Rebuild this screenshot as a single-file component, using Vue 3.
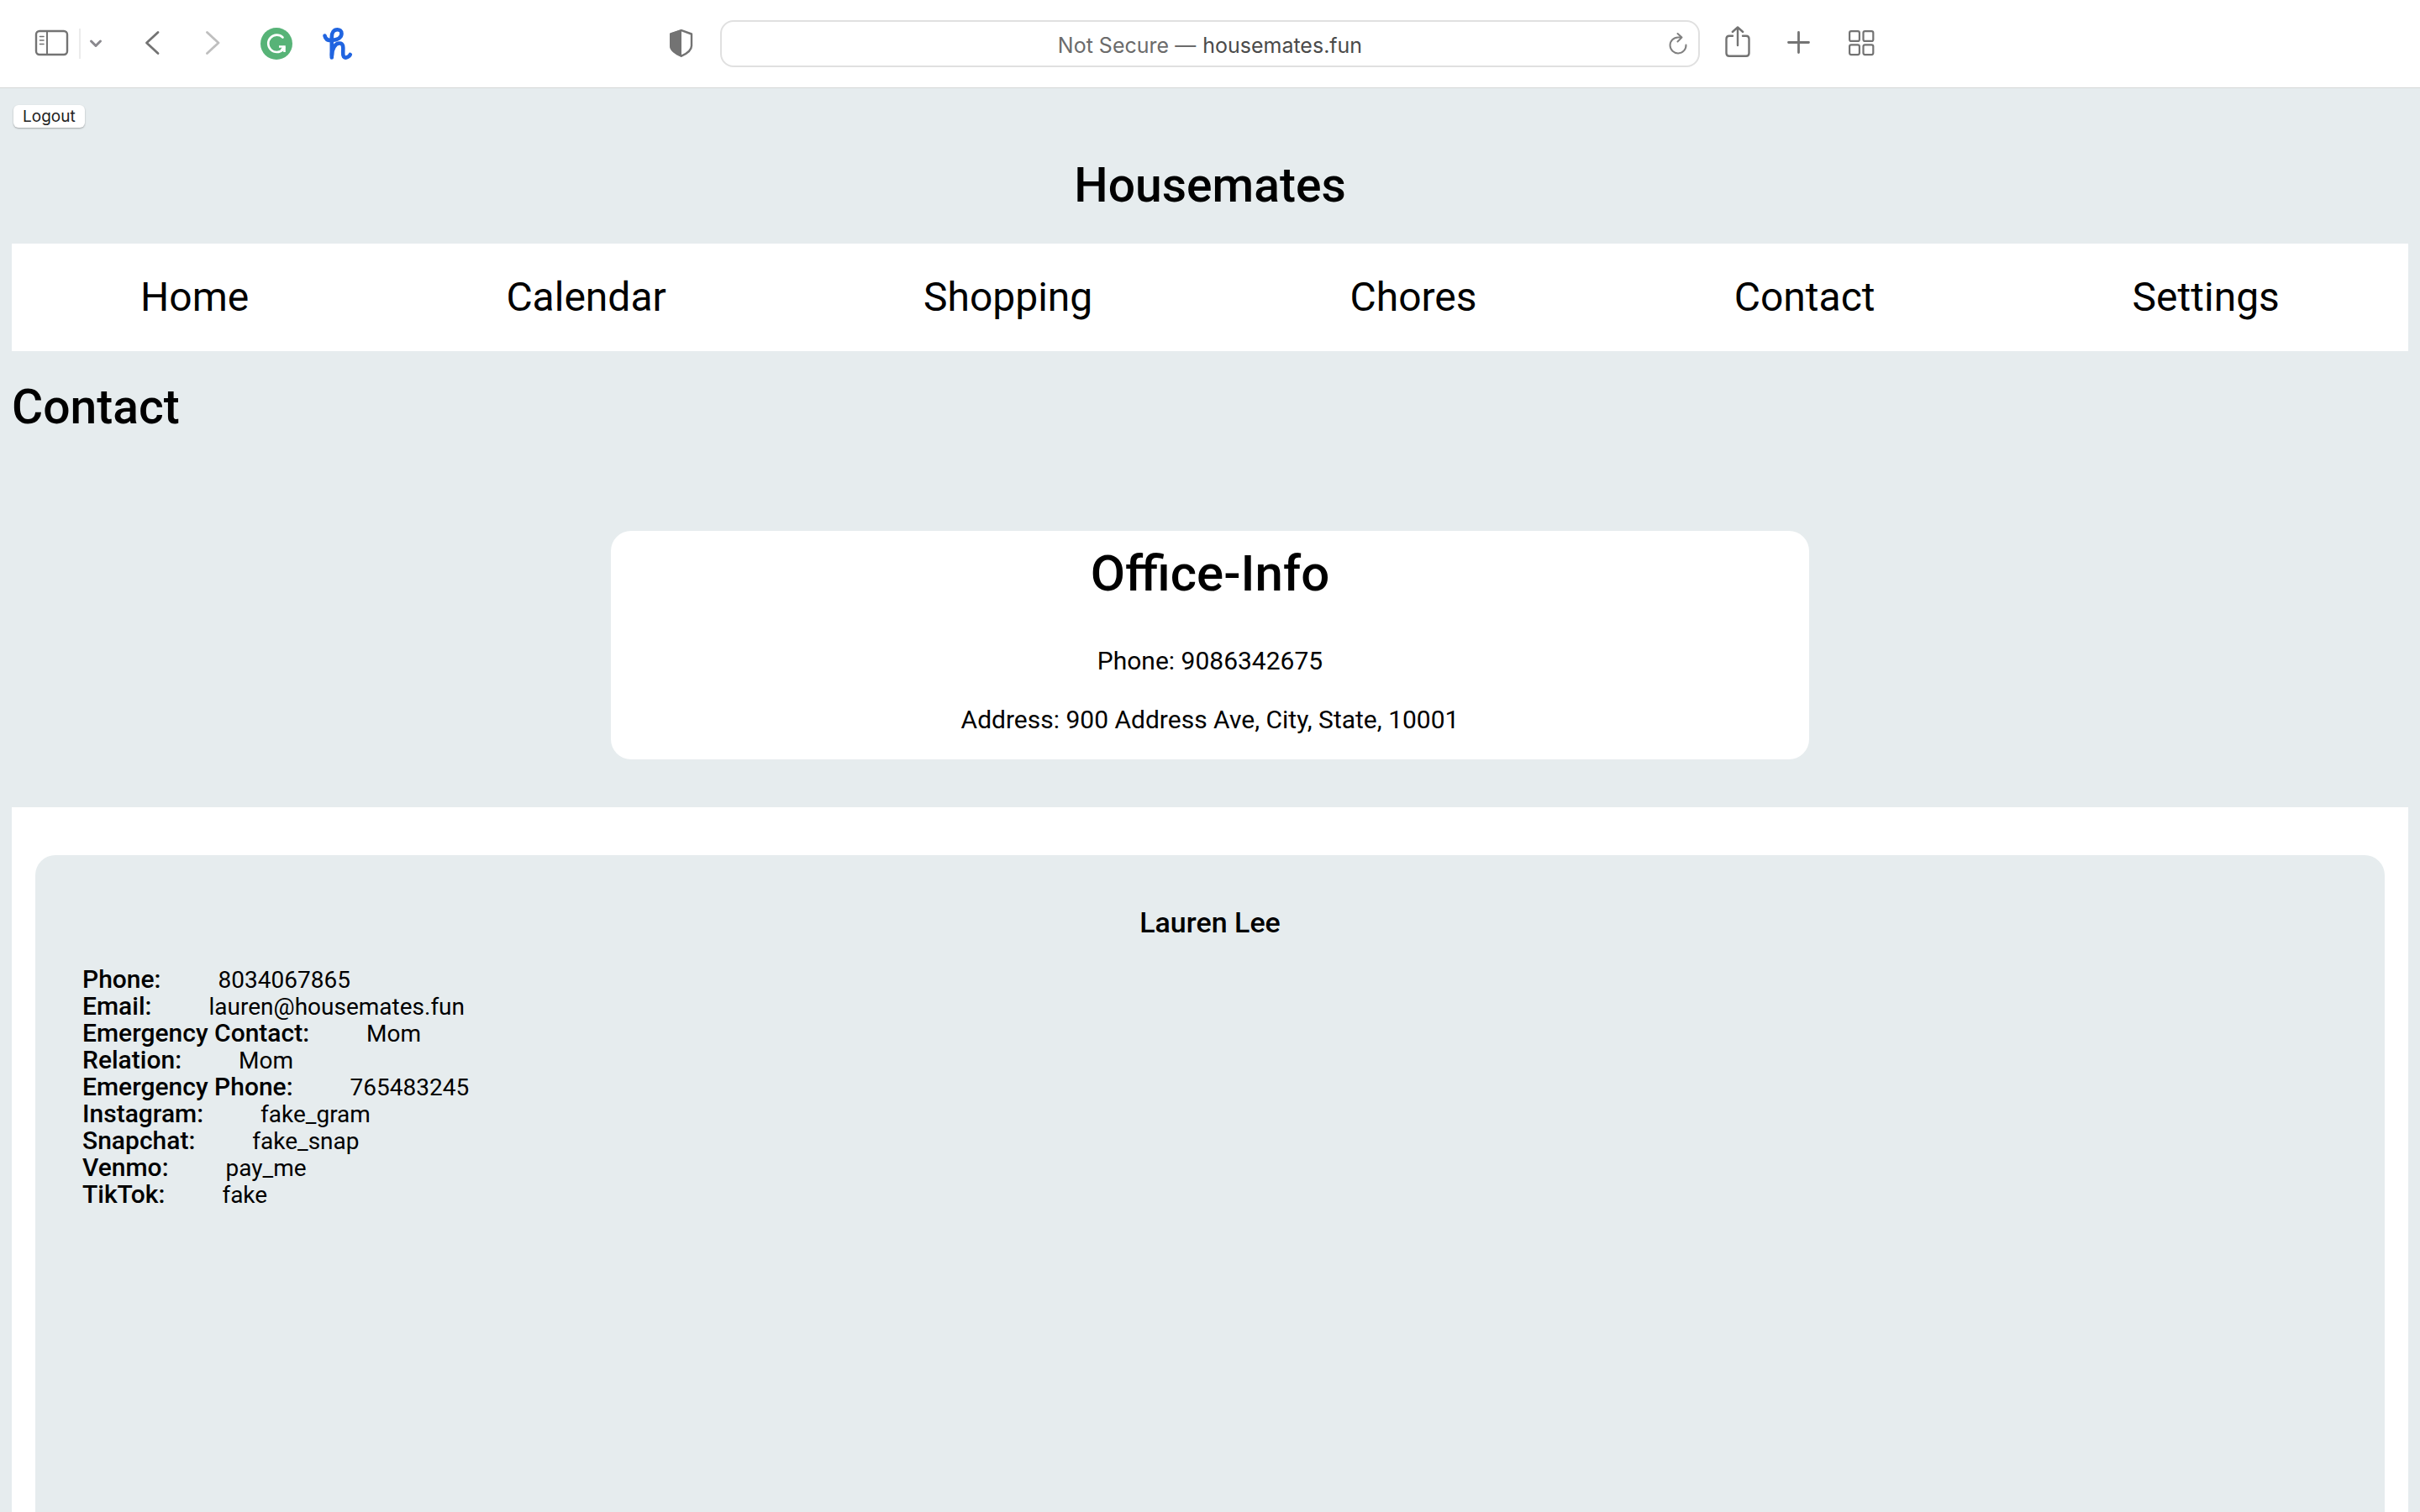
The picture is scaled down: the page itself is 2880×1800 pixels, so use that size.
<script setup>
import { ref } from 'vue'

const address = ref('housemates.fun')

const links = ['Home', 'Calendar', 'Shopping', 'Chores', 'Contact', 'Settings']

const details = [
  { label: 'Phone:', value: '8034067865' },
  { label: 'Email:', value: 'lauren@housemates.fun' },
  { label: 'Emergency Contact:', value: 'Mom' },
  { label: 'Relation:', value: 'Mom' },
  { label: 'Emergency Phone:', value: '765483245' },
  { label: 'Instagram:', value: 'fake_gram' },
  { label: 'Snapchat:', value: 'fake_snap' },
  { label: 'Venmo:', value: 'pay_me' },
  { label: 'TikTok:', value: 'fake' },
]
</script>

<template>
  <div class="window">
    <div class="toolbar">
      <div class="side start">
        <div class="group panel">
          <button class="tool" type="button" aria-label="Sidebar">
            <svg width="44" height="40" viewBox="0 0 44 40" fill="none" stroke="#737373">
              <rect x="3" y="5" width="37" height="28" rx="4" stroke-width="2.4" />
              <path d="M16 5v28" stroke-width="2" />
              <path d="M7.5 11.500h4.500M7.500 16h4.500M7.500 20.500h4.500" stroke-width="1.600" stroke-linecap="round" />
            </svg>
          </button>
          <span class="rule"></span>
          <button class="tool" type="button" aria-label="Tab groups">
            <svg width="20" height="40" viewBox="0 0 20 40" fill="none" stroke="#8a898e" stroke-width="3" stroke-linecap="round" stroke-linejoin="round">
              <path d="M2.500 17l5.500 5.500L13.500 17" />
            </svg>
          </button>
        </div>
        <div class="group history">
          <button class="tool" type="button" aria-label="Back">
            <svg width="26" height="40" viewBox="0 0 26 40" fill="none" stroke="#737373" stroke-width="2.800" stroke-linecap="round" stroke-linejoin="round">
              <path d="M18 6.500L4.500 19 18 31.500" />
            </svg>
          </button>
          <button class="tool" type="button" aria-label="Forward">
            <svg width="26" height="40" viewBox="0 0 26 40" fill="none" stroke="#bfbfbf" stroke-width="2.800" stroke-linecap="round" stroke-linejoin="round">
              <path d="M6.500 6.500L20 19 6.500 31.500" />
            </svg>
          </button>
        </div>
        <div class="group extensions">
          <button class="tool" type="button" aria-label="Grammarly">
            <svg width="38" height="40" viewBox="0 0 38 40" fill="none">
              <circle cx="19" cy="20" r="19" fill="#57b377" />
              <path d="M26.500 12.500A10.200 10.200 0 1 0 26.700 27" stroke="#fff" stroke-width="2.600" stroke-linecap="round" />
              <path d="M22 23.500h6.500v6.500" stroke="#fff" stroke-width="2.600" />
              <path d="M28.500 23.500L25 28" stroke="#fff" stroke-width="3" />
            </svg>
          </button>
          <button class="tool" type="button" aria-label="Honey">
            <svg width="36" height="40" viewBox="0 0 36 40" fill="none" stroke="#2064e0" stroke-width="4.600" stroke-linecap="round" stroke-linejoin="round">
              <path d="M2.500 10.500C3.500 15 6.500 16.500 11 16 18 15.500 22.500 12.500 22.500 8 22.500 4.500 20 3.300 17.500 3.300 13 3.300 10.800 7 10.800 12V36.500" />
              <path d="M11 34C11 26 15 19.500 20 19.500 25 19.500 24.500 25 24.200 30 24 35.500 25.500 37 28 36.500 30.500 36 32 34.500 32.800 33" />
            </svg>
          </button>
        </div>
        <button class="tool shield" type="button" aria-label="Privacy report">
          <svg width="28" height="40" viewBox="0 0 28 40">
            <path d="M14 4.200L26 8.500V22.500C26 28 20 32 14 34.700 8 32 1.200 28 1.200 22.500V8.500Z" fill="none" stroke="#737373" stroke-width="2.400" stroke-linejoin="round" />
            <path d="M14 3L0 8V22.500C0 29 7 33 14 36Z" fill="#737373" />
          </svg>
        </button>
      </div>

      <div class="address">
        <label class="entry">
          <span>Not Secure —</span>
          <input v-model="address" type="text" spellcheck="false" />
        </label>
        <button class="tool reload" type="button" aria-label="Reload">
          <svg width="24" height="40" viewBox="0 0 24 40" fill="none" stroke="#808080" stroke-width="2" stroke-linecap="round" stroke-linejoin="round">
            <path d="M21.500 21.500A9.500 9.500 0 1 1 12 12.400H16M11.500 8l5 4.600-5 4.900" />
          </svg>
        </button>
      </div>

      <div class="side end">
        <button class="tool" type="button" aria-label="Share">
          <svg width="32" height="40" viewBox="0 0 32 40" fill="none" stroke="#737373" stroke-width="2.400" stroke-linecap="round" stroke-linejoin="round">
            <path d="M10 10.700H6Q2.500 10.700 2.500 14.200V31.200Q2.500 34.700 6 34.700H26Q29.500 34.700 29.500 31.200V14.200Q29.500 10.700 26 10.700H22" />
            <path d="M16 22V1M9.800 6L16 .500 22.200 6" />
          </svg>
        </button>
        <button class="tool" type="button" aria-label="New tab">
          <svg width="32" height="40" viewBox="0 0 32 40" fill="none" stroke="#737373" stroke-width="2.800" stroke-linecap="round">
            <path d="M16.500 6.500v24M4.500 18.500h24" />
          </svg>
        </button>
        <button class="tool" type="button" aria-label="Tab overview">
          <svg width="36" height="40" viewBox="0 0 36 40" fill="none" stroke="#737373" stroke-width="2.200">
            <rect x="5.100" y="5.100" width="11.800" height="11.800" rx="2" />
            <rect x="21.500" y="5.100" width="11.800" height="11.800" rx="2" />
            <rect x="5.100" y="21.300" width="11.800" height="11.800" rx="2" />
            <rect x="21.500" y="21.300" width="11.800" height="11.800" rx="2" />
          </svg>
        </button>
      </div>
    </div>

    <main class="page">
      <button class="logout" type="button">Logout</button>
      <h1 class="brand">Housemates</h1>
      <nav class="menu">
        <a v-for="link in links" :key="link" href="#">{{ link }}</a>
      </nav>
      <h1 class="title">Contact</h1>

      <section class="office">
        <h2>Office-Info</h2>
        <p>Phone: 9086342675</p>
        <p>Address: 900 Address Ave, City, State, 10001</p>
      </section>

      <section class="people">
        <article class="person">
          <h3>Lauren Lee</h3>
          <dl>
            <div v-for="item in details" :key="item.label" class="detail">
              <dt>{{ item.label }}</dt>
              <dd>{{ item.value }}</dd>
            </div>
          </dl>
        </article>
      </section>
    </main>
  </div>
</template>

<style>
body {
  margin: 0;
  background: #e6ecee;
}
</style>

<style scoped>
.window {
  display: flex;
  flex-direction: column;
  min-height: 100vh;
  color: #000;
  font-family: Roboto, sans-serif;
}

.toolbar {
  display: grid;
  grid-template-columns: 1fr 40.5% 1fr;
  align-items: center;
  height: 104px;
  background: #fff;
  border-bottom: 1px solid #d6d8d8;
}

.side {
  display: flex;
  align-items: center;
}

.start {
  gap: 44px;
  padding: 0 32px 0 40px;
}

.end {
  gap: 40px;
  padding-left: 29px;
}

.group {
  display: flex;
  align-items: center;
}

.panel {
  gap: 10px;
}

.history {
  gap: 44px;
}

.extensions {
  gap: 36px;
}

.tool {
  display: block;
  padding: 0;
  border: 0;
  background: none;
}

.tool svg {
  display: block;
  overflow: visible;
}

.rule {
  width: 2px;
  height: 36px;
  background: #ebebeb;
}

.shield {
  margin-left: auto;
}

.address {
  display: grid;
  grid-template-columns: 1fr auto 1fr;
  align-items: center;
  box-sizing: border-box;
  height: 56px;
  padding: 0 12px;
  border: 2px solid #e0e0e0;
  border-radius: 16px;
}

.entry {
  display: flex;
  grid-column: 2;
  gap: 8px;
  padding-top: 4px;
  color: #6b6b6b;
  font: 25px/32px Inter, sans-serif;
}

.entry input {
  field-sizing: content;
  padding: 0;
  border: 0;
  outline: 0;
  background: none;
  color: #4a4a4a;
  font: inherit;
}

.reload {
  justify-self: end;
}

.page {
  display: flex;
  flex: 1;
  flex-direction: column;
  padding: 20px 14px 0;
}

.logout {
  align-self: flex-start;
  height: 27px;
  margin-left: 2px;
  padding: 0 11px;
  border: 0;
  border-radius: 6px;
  background: #fff;
  box-shadow: 0 1px 2px rgba(0, 0, 0, 0.3);
  color: #222;
  font: 19px/27px Inter, sans-serif;
}

h1,
h2,
h3 {
  margin: 0;
  font-weight: 500;
}

h1 {
  font-size: 57px;
  line-height: 66px;
}

.brand {
  margin: 36px 0;
  text-align: center;
}

.menu {
  display: flex;
  align-items: center;
  justify-content: space-around;
  height: 128px;
  background: #fff;
}

.menu a {
  color: #000;
  font-size: 48px;
  line-height: 56px;
  text-decoration: none;
}

.title {
  margin-top: 34px;
}

.office {
  align-self: center;
  box-sizing: border-box;
  width: 50%;
  margin: 114px 0 57px;
  padding: 16px 0 29px;
  border-radius: 24px;
  background: #fff;
  text-align: center;
}

.office h2 {
  margin-bottom: 51px;
  font-size: 60px;
  line-height: 70px;
}

.office p {
  margin: 0;
  font-size: 30px;
  line-height: 36px;
}

.office p + p {
  margin-top: 34px;
}

.people {
  display: flex;
  flex: 1;
  flex-direction: column;
  padding: 57px 28px 0;
  background: #fff;
}

.person {
  flex: 1;
  padding: 61px 56px;
  border-radius: 24px 24px 0 0;
  background: #e6ecee;
}

.person h3 {
  font-size: 34px;
  line-height: 38px;
  text-align: center;
}

dl {
  margin: 33px 0 0;
  font-size: 28px;
  line-height: 32px;
}

.detail {
  display: flex;
  gap: 68px;
  align-items: baseline;
  height: 32px;
}

dt {
  font-size: 30px;
  font-weight: 500;
}

dd {
  margin: 0;
}
</style>
